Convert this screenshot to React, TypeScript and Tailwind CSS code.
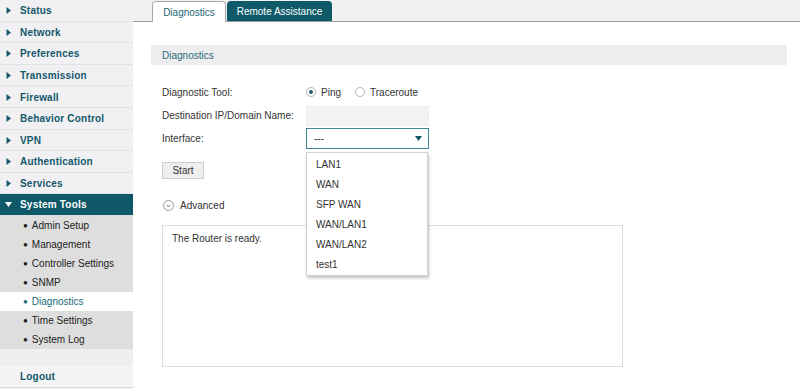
import React from "react"

const font = { fontFamily: '"Liberation Sans", Arial, sans-serif' }

const topMenu = [
  "Status",
  "Network",
  "Preferences",
  "Transmission",
  "Firewall",
  "Behavior Control",
  "VPN",
  "Authentication",
  "Services",
]

const subMenu = [
  "Admin Setup",
  "Management",
  "Controller Settings",
  "SNMP",
  "Diagnostics",
  "Time Settings",
  "System Log",
]

const options = ["LAN1", "WAN", "SFP WAN", "WAN/LAN1", "WAN/LAN2", "test1"]

function Arrow({ down, color }: { down?: boolean; color: string }) {
  return (
    <svg width="7" height="7" viewBox="0 0 7 7" className="shrink-0">
      {down ? (
        <path d="M0 1 L7 1 L3.5 6 Z" fill={color} />
      ) : (
        <path d="M1.5 0 L6 3.5 L1.5 7 Z" fill={color} />
      )}
    </svg>
  )
}

function Sidebar() {
  return (
    <div className="flex w-[133px] shrink-0 flex-col bg-[#f4f4f6]">
      {topMenu.map((item) => (
        <div
          key={item}
          className="flex h-[21.6px] items-center gap-[8px] border-b border-[#e2e2e6] bg-[#f1f1f4] pl-[5px] pt-[1px] text-[10px] font-bold tracking-[0.2px] text-[#14586a]"
        >
          <Arrow color="#14586a" />
          <span>{item}</span>
        </div>
      ))}
      <div className="flex h-[21px] items-center gap-[8px] bg-[#0e5868] pl-[5px] text-[10px] font-bold tracking-[0.2px] text-white">
        <Arrow down color="#ffffff" />
        <span>System Tools</span>
      </div>
      <div className="flex flex-col bg-[#dedede] pt-[1px]">
        {subMenu.map((item) => {
          const active = item === "Diagnostics"
          return (
            <div
              key={item}
              className={`flex h-[19px] items-center gap-[4px] pl-[23px] text-[10px] ${
                active ? "bg-white text-[#1d6778]" : "text-[#222]"
              }`}
            >
              <span className="text-[8px]">●</span>
              <span>{item}</span>
            </div>
          )
        })}
      </div>
      <div className="h-[17px] bg-[#efefef]" />
      <div className="flex h-[22px] items-center border-b border-[#dcdcdc] bg-[#f4f4f4] pl-[20px] text-[10px] font-bold tracking-[0.2px] text-[#14586a]">
        Logout
      </div>
      <div className="flex-1 bg-[#f4f4f4]" />
    </div>
  )
}

function Radio({ checked, label }: { checked?: boolean; label: string }) {
  return (
    <div className="flex items-center gap-[5px]">
      <span className="flex h-[10px] w-[10px] items-center justify-center rounded-full border border-[#b5b5b5] bg-white">
        {checked && <span className="h-[4px] w-[4px] rounded-full bg-[#1d5f6f]" />}
      </span>
      <span>{label}</span>
    </div>
  )
}

export default function App() {
  return (
    <div
      className="flex h-[389px] w-[800px] overflow-hidden bg-white text-[10px] text-[#333]"
      style={font}
    >
      <Sidebar />
      <div className="relative flex flex-1 flex-col">
        <div className="flex h-[22px] items-end gap-[1px] border-b border-[#9c9c9c] bg-[#f1f1f1] pl-[19px]">
          <div className="-mb-[1px] flex h-[21px] w-[74px] items-center justify-center rounded-t-[4px] border border-b-0 border-[#a8a8a8] bg-white text-[#1d6778]">
            Diagnostics
          </div>
          <div className="flex h-[20px] w-[105px] items-center justify-center rounded-t-[4px] bg-[#0e5a69] text-white">
            Remote Assistance
          </div>
        </div>

        <div className="ml-[18px] mr-[13px] mt-[23px] flex h-[20px] items-center bg-[#eeeeee] pl-[11px] text-[#2a6b7b]">
          Diagnostics
        </div>

        <div className="ml-[29px] mt-[16px] flex flex-col">
          <div className="flex h-[22px] items-center">
            <span className="w-[144px]">Diagnostic Tool:</span>
            <div className="flex items-center gap-[14px]">
              <Radio checked label="Ping" />
              <Radio label="Traceroute" />
            </div>
          </div>
          <div className="mt-[2px] flex h-[21px] items-center">
            <span className="w-[144px]">Destination IP/Domain Name:</span>
            <div className="h-[20px] w-[123px] border border-[#ececec] bg-[#f3f3f3]" />
          </div>
          <div className="mt-[2px] flex h-[21px] items-center">
            <span className="w-[144px]">Interface:</span>
            <div className="flex h-[21px] w-[123px] items-center justify-between border border-[#3f8595] bg-white pl-[7px] pr-[6px]">
              <span>---</span>
              <Arrow down color="#14586a" />
            </div>
          </div>
          <div className="mt-[13px] flex h-[17px] w-[42px] items-center justify-center border border-[#cfcfcf] bg-[#efefef] text-[#333]">
            Start
          </div>
          <div className="mt-[19px] flex items-center gap-[6px] pl-[1px]">
            <span className="flex h-[11px] w-[11px] items-center justify-center rounded-full border border-[#9a9a9a]">
              <svg width="5" height="4" viewBox="0 0 5 4">
                <path d="M0.5 0.8 L2.5 3 L4.5 0.8" fill="none" stroke="#777" strokeWidth="1" />
              </svg>
            </span>
            <span>Advanced</span>
          </div>
          <div className="mt-[12px] h-[142px] w-[461px] border border-[#dedede] bg-white px-[9px] pt-[5px]">
            The Router is ready.
          </div>
        </div>

        <div className="absolute left-[173px] top-[152px] w-[122px] border border-[#d2d2d2] bg-white py-[1px] shadow-[1px_2px_3px_rgba(0,0,0,0.25)]">
          {options.map((o) => (
            <div key={o} className="flex h-[20px] items-center pl-[9px] text-[#333]">
              {o}
            </div>
          ))}
        </div>
      </div>
    </div>
  )
}
